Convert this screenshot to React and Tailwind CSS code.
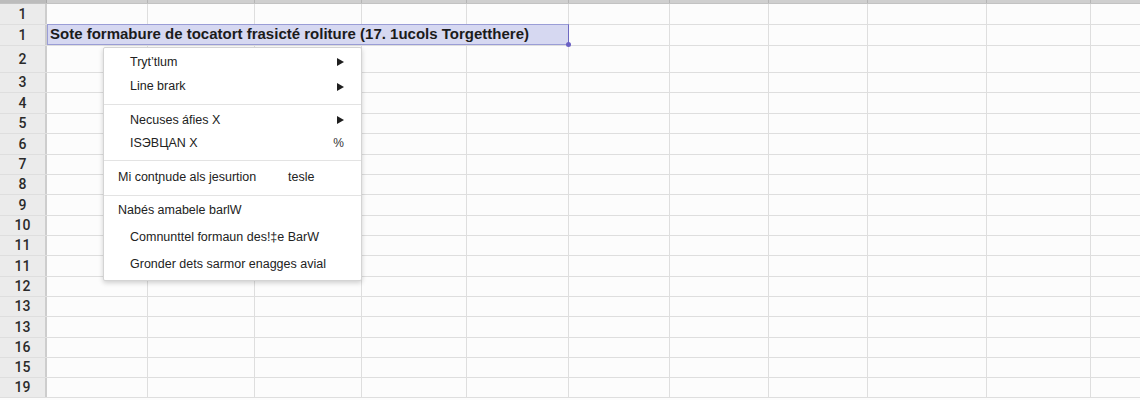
import React from 'react';

const COLS = [101, 107, 107, 105, 102, 101, 99, 99, 119, 104, 60];
const ROWS = [
  { label: '1', h: 21 },
  { label: '1', h: 21, selected: true },
  { label: '2', h: 27 },
  { label: '3', h: 20 },
  { label: '4', h: 21 },
  { label: '5', h: 20 },
  { label: '6', h: 21 },
  { label: '7', h: 20 },
  { label: '8', h: 20 },
  { label: '9', h: 21 },
  { label: '10', h: 20 },
  { label: '11', h: 20 },
  { label: '11', h: 21 },
  { label: '12', h: 20 },
  { label: '13', h: 20 },
  { label: '13', h: 21 },
  { label: '16', h: 20 },
  { label: '15', h: 20 },
  { label: '19', h: 20 },
];

const font = { fontFamily: '"Liberation Sans", Arial, sans-serif' };

function Arrow() {
  return (
    <svg width="7" height="8" viewBox="0 0 7 8" className="shrink-0">
      <polygon points="0,0 7,4 0,8" fill="#1f1f1f" />
    </svg>
  );
}

function Item({ h, indent = true, children, right }) {
  return (
    <div
      className={`flex items-center justify-between pr-[17px] text-[12.5px] text-[#222] ${indent ? 'pl-[26px]' : 'pl-[14px]'}`}
      style={{ height: h }}
    >
      {children}
      {right}
    </div>
  );
}

function Sep({ mt, mb }) {
  return <div className="h-px bg-[#e3e3e3]" style={{ marginTop: mt, marginBottom: mb }} />;
}

function ContextMenu() {
  return (
    <div className="absolute left-[103px] top-[47px] w-[259px] h-[234px] bg-white border border-[#d4d4d4] rounded-[2px] shadow-[0_2px_5px_rgba(0,0,0,0.18)] pt-[2px]">
      <Item h={24} right={<Arrow />}>Tryt’tlum</Item>
      <Item h={25} right={<Arrow />}>Line brark</Item>
      <Sep mt={5} mb={5} />
      <Item h={20} right={<Arrow />}>Necuses áfies X</Item>
      <Item h={26} right={<span className="text-[12px] text-[#333]">%</span>}>ISЭBЦAN X</Item>
      <Sep mt={4} mb={4} />
      <Item h={24} indent={false}>
        <span className="flex">
          <span className="w-[170px]">Mi contɲude als jesurtion</span>
          <span>tesle</span>
        </span>
      </Item>
      <Sep mt={6} mb={1} />
      <Item h={27} indent={false}>Nabés amabele barlW</Item>
      <Item h={27}>Comnunttel formaun des!‡e BarW</Item>
      <Item h={27}>Gronder dets sarmor enagges avial</Item>
    </div>
  );
}

export default function App() {
  return (
    <div className="relative w-[1140px] h-[400px] overflow-hidden bg-[#fcfcfc]" style={font}>
      {/* column header strip */}
      <div className="flex h-[4px] bg-[#cfcfcf] border-b border-[#c2c2c2]">
        <div className="w-[47px] shrink-0 bg-[#bcbcbc] border-r border-[#a9a9a9]" />
        {COLS.map((w, i) => (
          <div key={i} className="shrink-0 border-r border-[#b5b5b5]" style={{ width: w }} />
        ))}
      </div>

      {ROWS.map((r, ri) => (
        <div key={ri} className="flex box-border border-b border-[#dedede]" style={{ height: r.h }}>
          <div className="w-[47px] shrink-0 flex items-center justify-center bg-[#ebebeb] border-r-2 border-[#cdcdcd] text-[14px] font-medium text-[#2a2a2a]" style={{ fontFamily: 'Roboto, "Liberation Sans", sans-serif' }}>
            {r.label}
          </div>
          {r.selected ? (
            <>
              <div className="relative shrink-0 w-[522px] -mt-px h-[calc(100%+1px)] bg-[#d6d8f1] border border-[#9a9dd6] border-r-[#6e69c2] flex items-center pl-[2px] text-[15px] font-bold text-[#1b1b1b] whitespace-nowrap">
                Sote formabure de tocatort frasicté roliture (17. 1ucols Torgetthere)
                <span className="absolute -right-[3px] -bottom-[3px] w-[5px] h-[5px] rounded-full bg-[#6a60c4]" />
              </div>
              {COLS.slice(5).map((w, i) => (
                <div key={i} className="shrink-0 border-r border-[#dedede]" style={{ width: w }} />
              ))}
            </>
          ) : (
            COLS.map((w, i) => (
              <div key={i} className="shrink-0 border-r border-[#dedede]" style={{ width: w }} />
            ))
          )}
        </div>
      ))}

      <ContextMenu />
    </div>
  );
}
